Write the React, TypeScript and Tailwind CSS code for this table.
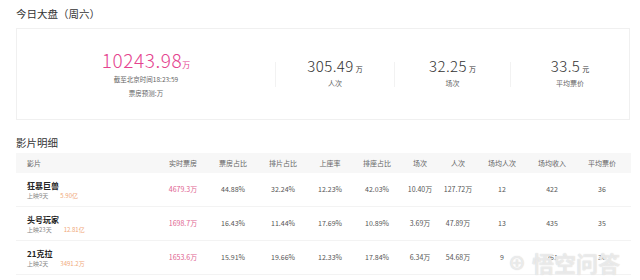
const cjk = { fontFamily: '"Noto Sans CJK SC", "Noto Sans", sans-serif' }

type Film = {
  name: string
  days: string
  total: string
  cells: string[]
}

const head = ['实时票房', '票房占比', '排片占比', '上座率', '排座占比', '场次', '人次', '场均人次', '场均收入', '平均票价']

const films: Film[] = [
  {
    name: '狂暴巨兽',
    days: '上映9天',
    total: '5.90亿',
    cells: ['4679.3万', '44.88%', '32.24%', '12.23%', '42.03%', '10.40万', '127.72万', '12', '422', '36'],
  },
  {
    name: '头号玩家',
    days: '上映23天',
    total: '12.81亿',
    cells: ['1698.7万', '16.43%', '11.44%', '17.69%', '10.89%', '3.69万', '47.89万', '13', '435', '35'],
  },
  {
    name: '21克拉',
    days: '上映2天',
    total: '3491.2万',
    cells: ['1653.6万', '15.91%', '19.66%', '12.33%', '17.84%', '6.34万', '54.68万', '9', '261', '30'],
  },
]

const stats = [
  { value: '305.49', unit: '万', label: '人次' },
  { value: '32.25', unit: '万', label: '场次' },
  { value: '33.5', unit: '元', label: '平均票价' },
]

const cols = 'grid grid-cols-[142px_50px_50px_50px_44px_50px_36px_40px_48px_52px_48px]'

export default function App() {
  return (
    <div className="relative w-[640px] h-[280px] overflow-hidden bg-white text-[#333]" style={cjk}>
      {/* 今日大盘 */}
      <div className="pl-4 pt-[7px]">
        <h2 className="text-[10.5px] leading-[14px] text-[#333]">今日大盘（周六）</h2>
        <div className="mt-[7px] mr-[10px] h-[92px] border border-[#f0f0f0] flex items-center">
          <div className="w-[262px] flex flex-col items-center">
            <div className="text-[#e5448f] leading-none">
              <span className="text-[19px] font-light tracking-[0.6px]">10243.98</span>
              <span className="text-[8px]">万</span>
            </div>
            <p className="mt-[6px] text-[6.5px] leading-[9px] text-[#666]">截至北京时间18:23:59</p>
            <p className="mt-[5px] text-[6.5px] leading-[9px] text-[#666]">票房预测:万</p>
          </div>
          {stats.map((s, i) => (
            <div key={s.label} className="flex items-center">
              <div className="w-px h-[25px] bg-[#f2f2f2]" />
              <div className={`${i === 1 ? 'w-[115px]' : 'w-[118px]'} flex flex-col items-center pb-[4px]`}>
                <div className="leading-none text-[#333]">
                  <span className="text-[15px] font-light tracking-[0.4px]">{s.value}</span>
                  <span className="text-[7px] ml-[2px]">{s.unit}</span>
                </div>
                <p className="mt-[6px] text-[7px] leading-[9px] text-[#666]">{s.label}</p>
              </div>
            </div>
          ))}
        </div>
      </div>

      {/* 影片明细 */}
      <div className="pl-4 pt-[16px]">
        <h2 className="text-[10.5px] leading-[14px] text-[#333]">影片明细</h2>
        <div className="mt-[3px] w-[615px]">
          <div className={`${cols} h-[20px] items-center bg-[#f7f7f7] text-[7px] text-[#666]`}>
            <div className="pl-[11px]">影片</div>
            {head.map((h) => (
              <div key={h} className="text-center">{h}</div>
            ))}
          </div>
          {films.map((f) => (
            <div key={f.name} className={`${cols} h-[34px] items-center border-b border-[#f3f3f3] text-[7px] text-[#555]`}>
              <div className="pl-[11px] pt-[1px]">
                <div className="text-[8px] leading-[11px] font-bold text-[#222]">{f.name}</div>
                <div className="mt-[1px] flex gap-[12px] text-[6px] leading-[8px]">
                  <span className="text-[#888]">{f.days}</span>
                  <span className="text-[#f0a878]">{f.total}</span>
                </div>
              </div>
              {f.cells.map((c, i) => (
                <div key={i} className={`text-center ${i === 0 ? 'text-[#e0628f]' : ''}`}>{c}</div>
              ))}
            </div>
          ))}
        </div>
      </div>

      {/* watermark */}
      <div className="absolute left-[508px] top-[249px] flex items-center gap-[6px] text-[22px] leading-[26px] font-bold text-white/60 [text-shadow:0_0_1px_#c8c8c8]">
        <span className="text-[18px]">⊕</span>
        <span>悟空问答</span>
      </div>
    </div>
  )
}
